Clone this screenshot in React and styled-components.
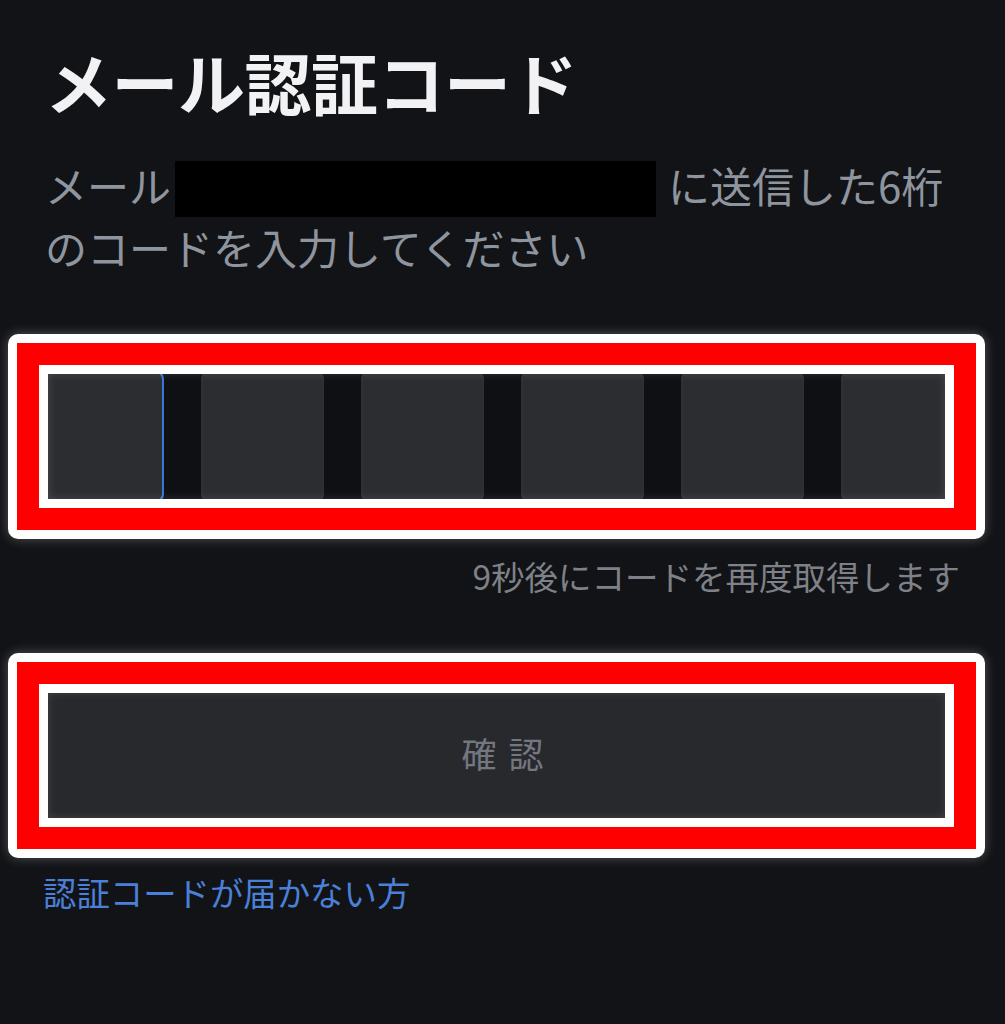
import React from 'react';
import styled, { createGlobalStyle } from 'styled-components';

const GlobalStyle = createGlobalStyle`
  html, body {
    margin: 0;
    padding: 0;
    background: #121316;
  }
  body {
    font-family: "Noto Sans CJK JP", "Noto Sans", sans-serif;
  }
`;

const CODE_LENGTH = 6;

export default function App() {
  return (
    <>
      <GlobalStyle />
      <Page>
        <Title>メール認証コード</Title>
        <Lead>
          メール<Redacted />に送信した6桁
          <br />
          のコードを入力してください
        </Lead>

        <Highlight>
          <Band>
            <InnerLine>
              <CodeArea>
                <CodeRow>
                  {Array.from({ length: CODE_LENGTH }).map((_, i) => (
                    <CodeBox key={i} $active={i === 0} />
                  ))}
                </CodeRow>
              </CodeArea>
            </InnerLine>
          </Band>
        </Highlight>

        <Countdown>9秒後にコードを再度取得します</Countdown>

        <Highlight>
          <Band>
            <InnerLine>
              <ConfirmButton disabled>確認</ConfirmButton>
            </InnerLine>
          </Band>
        </Highlight>

        <HelpLink href="#">認証コードが届かない方</HelpLink>
      </Page>
    </>
  );
}

const Page = styled.main`
  width: 1005px;
  min-height: 1024px;
  padding-top: 41px;
  box-sizing: border-box;
  background: #121316;
  display: flex;
  flex-direction: column;
`;

const Title = styled.h1`
  margin: 0;
  padding: 0 45px;
  font-size: 67px;
  line-height: 79px;
  font-weight: 700;
  color: #f2f2f4;
  letter-spacing: -0.5px;
`;

const Lead = styled.p`
  margin: 35px 0 0;
  padding: 0 45px;
  font-size: 42px;
  line-height: 60px;
  color: #8f959f;
`;

const Redacted = styled.span`
  display: inline-block;
  width: 481px;
  height: 56px;
  margin: 0 12px 0 4px;
  vertical-align: -14px;
  background: #000;
`;

/* red annotation frame: white / red / white strokes */
const Highlight = styled.div`
  margin: 57px 20px 0 8px;
  border: 9px solid #fff;
  border-radius: 10px;
  box-shadow: 0 0 12px rgba(255, 255, 255, 0.28);

  & + & {
    margin-top: 51px;
  }
`;

const Band = styled.div`
  border: 22px solid #ff0000;
`;

const InnerLine = styled.div`
  border: 9px solid #fff;
`;

const CodeArea = styled.div`
  position: relative;
  height: 125px;
  overflow: hidden;
  background: #0f1013;

  &::after {
    content: '';
    position: absolute;
    inset: 0;
    pointer-events: none;
    box-shadow: inset 0 0 10px rgba(255, 255, 255, 0.14);
  }
`;

const CodeRow = styled.div`
  display: flex;
  align-items: center;
  gap: 37px;
  height: 100%;
  margin-left: -7px;
`;

const CodeBox = styled.div`
  flex: 0 0 123px;
  height: 131px;
  box-sizing: border-box;
  border-radius: 8px;
  background: #2c2d31;
  border: 2px solid ${(p) => (p.$active ? '#3b76d6' : '#2f3034')};
`;

const Countdown = styled.div`
  margin-top: 17px;
  padding: 0 45px;
  text-align: right;
  font-size: 33.5px;
  line-height: 40px;
  color: #7e8187;
`;

const ConfirmButton = styled.button`
  display: flex;
  align-items: center;
  justify-content: center;
  width: 100%;
  height: 125px;
  padding: 0 0 6px 24px;
  border: 0;
  border-radius: 0;
  background: #28292d;
  box-shadow: inset 0 0 10px rgba(255, 255, 255, 0.12);
  font-family: inherit;
  font-size: 35px;
  letter-spacing: 12px;
  color: #737780;
  cursor: default;
`;

const HelpLink = styled.a`
  margin-top: 14px;
  padding: 0 43px;
  font-size: 33.4px;
  line-height: 40px;
  color: #4a80d9;
  text-decoration: none;
  align-self: flex-start;
`;
